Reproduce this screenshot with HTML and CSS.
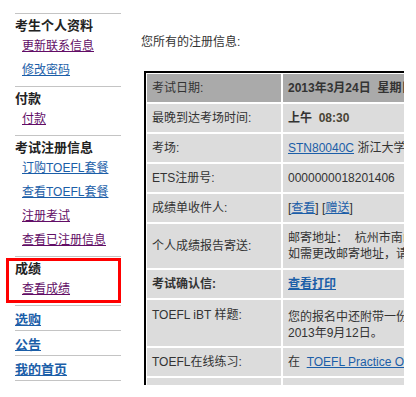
FILE: index.html
```html
<!DOCTYPE html>
<html lang="zh-CN">
<head>
    <meta charset="UTF-8">
    <title>注册信息</title>
    <link rel="stylesheet" href="styles.css">
</head>
<body>
    <div class="page">
        <div class="sidebar">
            <div class="side-section">
                <div class="side-title">考生个人资料</div>
                <a href="#" class="side-link visited">更新联系信息</a>
                <a href="#" class="side-link">修改密码</a>
            </div>
            <div class="side-section">
                <div class="side-title">付款</div>
                <a href="#" class="side-link visited">付款</a>
            </div>
            <div class="side-section">
                <div class="side-title">考试注册信息</div>
                <a href="#" class="side-link">订购TOEFL套餐</a>
                <a href="#" class="side-link">查看TOEFL套餐</a>
                <a href="#" class="side-link visited">注册考试</a>
                <a href="#" class="side-link visited">查看已注册信息</a>
            </div>
            <div class="side-section marked">
                <div class="side-title">成绩</div>
                <a href="#" class="side-link visited">查看成绩</a>
                <div class="mark-box"></div>
            </div>
            <a href="#" class="side-item">选购</a>
            <a href="#" class="side-item">公告</a>
            <a href="#" class="side-item last">我的首页</a>
        </div>

        <div class="main">
            <div class="intro">您所有的注册信息:</div>
            <div class="table-wrap">
                <table class="reg-table">
                    <colgroup>
                        <col class="col-label">
                        <col class="col-value">
                    </colgroup>
                    <tr class="head-row">
                        <td>考试日期:</td>
                        <td><b>2013年3月24日&nbsp; 星期日</b></td>
                    </tr>
                    <tr>
                        <td>最晚到达考场时间:</td>
                        <td><b>上午&nbsp; <span class="time">08:30</span></b></td>
                    </tr>
                    <tr>
                        <td>考场:</td>
                        <td><a href="#">STN80040C</a> 浙江大学玉泉校区</td>
                    </tr>
                    <tr>
                        <td>ETS注册号:</td>
                        <td>0000000018201406</td>
                    </tr>
                    <tr>
                        <td>成绩单收件人:</td>
                        <td>[<a href="#">查看</a>] [<a href="#">赠送</a>]</td>
                    </tr>
                    <tr>
                        <td>个人成绩报告寄送:</td>
                        <td>邮寄地址：&nbsp; 杭州市南山路<br>如需更改邮寄地址，请登录</td>
                    </tr>
                    <tr>
                        <td><b>考试确认信:</b></td>
                        <td><a href="#" class="strong-link">查看打印</a></td>
                    </tr>
                    <tr class="sample-row">
                        <td>TOEFL iBT 样题:</td>
                        <td>您的报名中还附带一份样题<br>2013年9月12日。</td>
                    </tr>
                    <tr>
                        <td>TOEFL在线练习:</td>
                        <td>在&nbsp; <a href="#">TOEFL Practice Online</a></td>
                    </tr>
                    <tr>
                        <td>&nbsp;</td>
                        <td>&nbsp;</td>
                    </tr>
                </table>
            </div>
        </div>
    </div>
</body>
</html>
```

FILE: styles.css
```css
* {
    margin: 0;
    padding: 0;
    box-sizing: border-box;
}

body {
    font-family: "Liberation Sans", Arial, "Noto Sans CJK SC", sans-serif;
    font-size: 12px;
    color: #333;
    background: #fff;
}

a {
    color: #1b5ea8;
    text-decoration: underline;
}

.page {
    display: flex;
    align-items: flex-start;
}

/* 左侧菜单 */
.sidebar {
    width: 106px;
    margin: 13px 0 0 15px;
    flex-shrink: 0;
}

.side-section {
    position: relative;
    border-top: 1px solid #c4c4c4;
    padding: 4px 0 4px;
}

.side-title {
    font-size: 13px;
    font-weight: bold;
    line-height: 16px;
    color: #222;
}

.side-link {
    display: block;
    line-height: 24px;
    padding-left: 7px;
    white-space: nowrap;
}

.side-link.visited {
    color: #620d66;
}

.mark-box {
    position: absolute;
    top: 1px;
    left: -9px;
    width: 115px;
    height: 45px;
    border: 3px solid #f00;
}

.side-item {
    display: block;
    border-top: 1px solid #c4c4c4;
    padding-top: 3px;
    line-height: 21px;
    font-size: 13px;
    font-weight: bold;
}

.side-item.last {
    border-bottom: 1px solid #c4c4c4;
}

/* 右侧内容 */
.main {
    margin-left: 20px;
    padding-top: 34px;
}

.intro {
    line-height: 16px;
    margin-bottom: 21px;
}

.table-wrap {
    margin-left: 3px;
    width: 260px;
    height: 314px;
    overflow: hidden;
    border-top: 2px solid #000;
    border-left: 2px solid #000;
    padding: 1px 0 0 1px;
}

.reg-table {
    width: 520px;
    table-layout: fixed;
    border-collapse: collapse;
}

.col-label {
    width: 135px;
}

.reg-table td {
    background: #dcdcdc;
    border-right: 2px solid #fff;
    border-bottom: 2px solid #fff;
    padding: 6px 5px;
    line-height: 16px;
    vertical-align: middle;
    white-space: nowrap;
}

.head-row td {
    background: #aaa;
}

.time {
    color: #4a4536;
}

.strong-link {
    font-weight: bold;
}

.sample-row td:first-child {
    vertical-align: top;
    padding-top: 7px;
}

.sample-row td:last-child {
    padding: 9px 5px 5px;
}
```
